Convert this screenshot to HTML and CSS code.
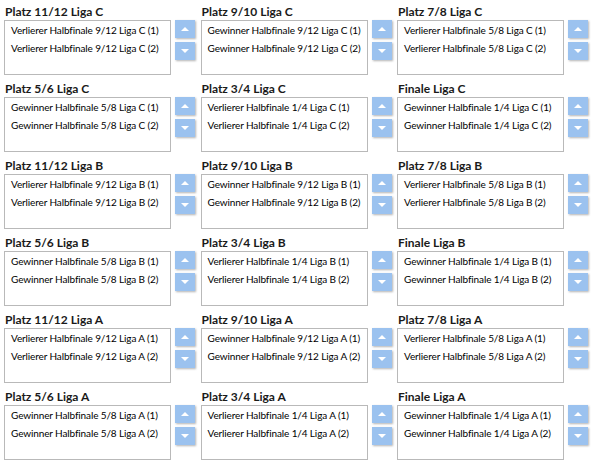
FILE: index.html
```html
<!DOCTYPE html>
<html lang="de">
<head>
    <meta charset="UTF-8">
    <title>Platzierungsspiele</title>
    <link rel="stylesheet" href="styles.css">
</head>
<body>
    <div class="board">
        <div class="match">
            <div class="match-title">Platz 11/12 Liga C</div>
            <div class="match-body">
                <ul class="list"><li>Verlierer Halbfinale 9/12 Liga C (1)</li><li>Verlierer Halbfinale 9/12 Liga C (2)</li></ul>
                <div class="buttons"><button class="btn up"></button><button class="btn down"></button></div>
            </div>
        </div>
        <div class="match">
            <div class="match-title">Platz 9/10 Liga C</div>
            <div class="match-body">
                <ul class="list"><li>Gewinner Halbfinale 9/12 Liga C (1)</li><li>Gewinner Halbfinale 9/12 Liga C (2)</li></ul>
                <div class="buttons"><button class="btn up"></button><button class="btn down"></button></div>
            </div>
        </div>
        <div class="match">
            <div class="match-title">Platz 7/8 Liga C</div>
            <div class="match-body">
                <ul class="list"><li>Verlierer Halbfinale 5/8 Liga C (1)</li><li>Verlierer Halbfinale 5/8 Liga C (2)</li></ul>
                <div class="buttons"><button class="btn up"></button><button class="btn down"></button></div>
            </div>
        </div>

        <div class="match">
            <div class="match-title">Platz 5/6 Liga C</div>
            <div class="match-body">
                <ul class="list"><li>Gewinner Halbfinale 5/8 Liga C (1)</li><li>Gewinner Halbfinale 5/8 Liga C (2)</li></ul>
                <div class="buttons"><button class="btn up"></button><button class="btn down"></button></div>
            </div>
        </div>
        <div class="match">
            <div class="match-title">Platz 3/4 Liga C</div>
            <div class="match-body">
                <ul class="list"><li>Verlierer Halbfinale 1/4 Liga C (1)</li><li>Verlierer Halbfinale 1/4 Liga C (2)</li></ul>
                <div class="buttons"><button class="btn up"></button><button class="btn down"></button></div>
            </div>
        </div>
        <div class="match">
            <div class="match-title">Finale Liga C</div>
            <div class="match-body">
                <ul class="list"><li>Gewinner Halbfinale 1/4 Liga C (1)</li><li>Gewinner Halbfinale 1/4 Liga C (2)</li></ul>
                <div class="buttons"><button class="btn up"></button><button class="btn down"></button></div>
            </div>
        </div>

        <div class="match">
            <div class="match-title">Platz 11/12 Liga B</div>
            <div class="match-body">
                <ul class="list"><li>Verlierer Halbfinale 9/12 Liga B (1)</li><li>Verlierer Halbfinale 9/12 Liga B (2)</li></ul>
                <div class="buttons"><button class="btn up"></button><button class="btn down"></button></div>
            </div>
        </div>
        <div class="match">
            <div class="match-title">Platz 9/10 Liga B</div>
            <div class="match-body">
                <ul class="list"><li>Gewinner Halbfinale 9/12 Liga B (1)</li><li>Gewinner Halbfinale 9/12 Liga B (2)</li></ul>
                <div class="buttons"><button class="btn up"></button><button class="btn down"></button></div>
            </div>
        </div>
        <div class="match">
            <div class="match-title">Platz 7/8 Liga B</div>
            <div class="match-body">
                <ul class="list"><li>Verlierer Halbfinale 5/8 Liga B (1)</li><li>Verlierer Halbfinale 5/8 Liga B (2)</li></ul>
                <div class="buttons"><button class="btn up"></button><button class="btn down"></button></div>
            </div>
        </div>

        <div class="match">
            <div class="match-title">Platz 5/6 Liga B</div>
            <div class="match-body">
                <ul class="list"><li>Gewinner Halbfinale 5/8 Liga B (1)</li><li>Gewinner Halbfinale 5/8 Liga B (2)</li></ul>
                <div class="buttons"><button class="btn up"></button><button class="btn down"></button></div>
            </div>
        </div>
        <div class="match">
            <div class="match-title">Platz 3/4 Liga B</div>
            <div class="match-body">
                <ul class="list"><li>Verlierer Halbfinale 1/4 Liga B (1)</li><li>Verlierer Halbfinale 1/4 Liga B (2)</li></ul>
                <div class="buttons"><button class="btn up"></button><button class="btn down"></button></div>
            </div>
        </div>
        <div class="match">
            <div class="match-title">Finale Liga B</div>
            <div class="match-body">
                <ul class="list"><li>Gewinner Halbfinale 1/4 Liga B (1)</li><li>Gewinner Halbfinale 1/4 Liga B (2)</li></ul>
                <div class="buttons"><button class="btn up"></button><button class="btn down"></button></div>
            </div>
        </div>

        <div class="match">
            <div class="match-title">Platz 11/12 Liga A</div>
            <div class="match-body">
                <ul class="list"><li>Verlierer Halbfinale 9/12 Liga A (1)</li><li>Verlierer Halbfinale 9/12 Liga A (2)</li></ul>
                <div class="buttons"><button class="btn up"></button><button class="btn down"></button></div>
            </div>
        </div>
        <div class="match">
            <div class="match-title">Platz 9/10 Liga A</div>
            <div class="match-body">
                <ul class="list"><li>Gewinner Halbfinale 9/12 Liga A (1)</li><li>Gewinner Halbfinale 9/12 Liga A (2)</li></ul>
                <div class="buttons"><button class="btn up"></button><button class="btn down"></button></div>
            </div>
        </div>
        <div class="match">
            <div class="match-title">Platz 7/8 Liga A</div>
            <div class="match-body">
                <ul class="list"><li>Verlierer Halbfinale 5/8 Liga A (1)</li><li>Verlierer Halbfinale 5/8 Liga A (2)</li></ul>
                <div class="buttons"><button class="btn up"></button><button class="btn down"></button></div>
            </div>
        </div>

        <div class="match">
            <div class="match-title">Platz 5/6 Liga A</div>
            <div class="match-body">
                <ul class="list"><li>Gewinner Halbfinale 5/8 Liga A (1)</li><li>Gewinner Halbfinale 5/8 Liga A (2)</li></ul>
                <div class="buttons"><button class="btn up"></button><button class="btn down"></button></div>
            </div>
        </div>
        <div class="match">
            <div class="match-title">Platz 3/4 Liga A</div>
            <div class="match-body">
                <ul class="list"><li>Verlierer Halbfinale 1/4 Liga A (1)</li><li>Verlierer Halbfinale 1/4 Liga A (2)</li></ul>
                <div class="buttons"><button class="btn up"></button><button class="btn down"></button></div>
            </div>
        </div>
        <div class="match">
            <div class="match-title">Finale Liga A</div>
            <div class="match-body">
                <ul class="list"><li>Gewinner Halbfinale 1/4 Liga A (1)</li><li>Gewinner Halbfinale 1/4 Liga A (2)</li></ul>
                <div class="buttons"><button class="btn up"></button><button class="btn down"></button></div>
            </div>
        </div>
    </div>
</body>
</html>
```

FILE: styles.css
```css
body {
    margin: 0;
    padding: 0;
    background: #fff;
    font-family: 'Lato', 'Noto Sans', sans-serif;
    color: #000;
}
.board {
    display: grid;
    grid-template-columns: repeat(3, 192px);
    column-gap: 4.5px;
    row-gap: 6px;
    padding: 4px 0 0 4px;
}
.match-title {
    height: 16px;
    padding-left: 1px;
    font-size: 12px;
    font-weight: bold;
    line-height: 16px;
    color: #1a1a1a;
}
.match-body {
    display: flex;
    gap: 4px;
}
.list {
    box-sizing: border-box;
    width: 167px;
    height: 55px;
    margin: 0;
    padding: 0 6px;
    list-style: none;
    border: 1px solid #b9b9b9;
    font-size: 10px;
    letter-spacing: -0.12px;
    line-height: 18px;
    white-space: nowrap;
    overflow: hidden;
}
.buttons {
    display: flex;
    flex-direction: column;
    gap: 4px;
}
.btn {
    position: relative;
    width: 20px;
    height: 18px;
    padding: 0;
    border: none;
    background-color: #9bc2ef;
    box-shadow: 1px 1px 2px rgba(0, 0, 0, 0.3);
    cursor: pointer;
}
.btn::after {
    content: "";
    position: absolute;
    left: 6px;
    width: 0;
    height: 0;
    border-left: 4px solid transparent;
    border-right: 4px solid transparent;
}
.btn.up::after {
    top: 7px;
    border-bottom: 4px solid #fff;
}
.btn.down::after {
    top: 7px;
    border-top: 4px solid #fff;
}
```
